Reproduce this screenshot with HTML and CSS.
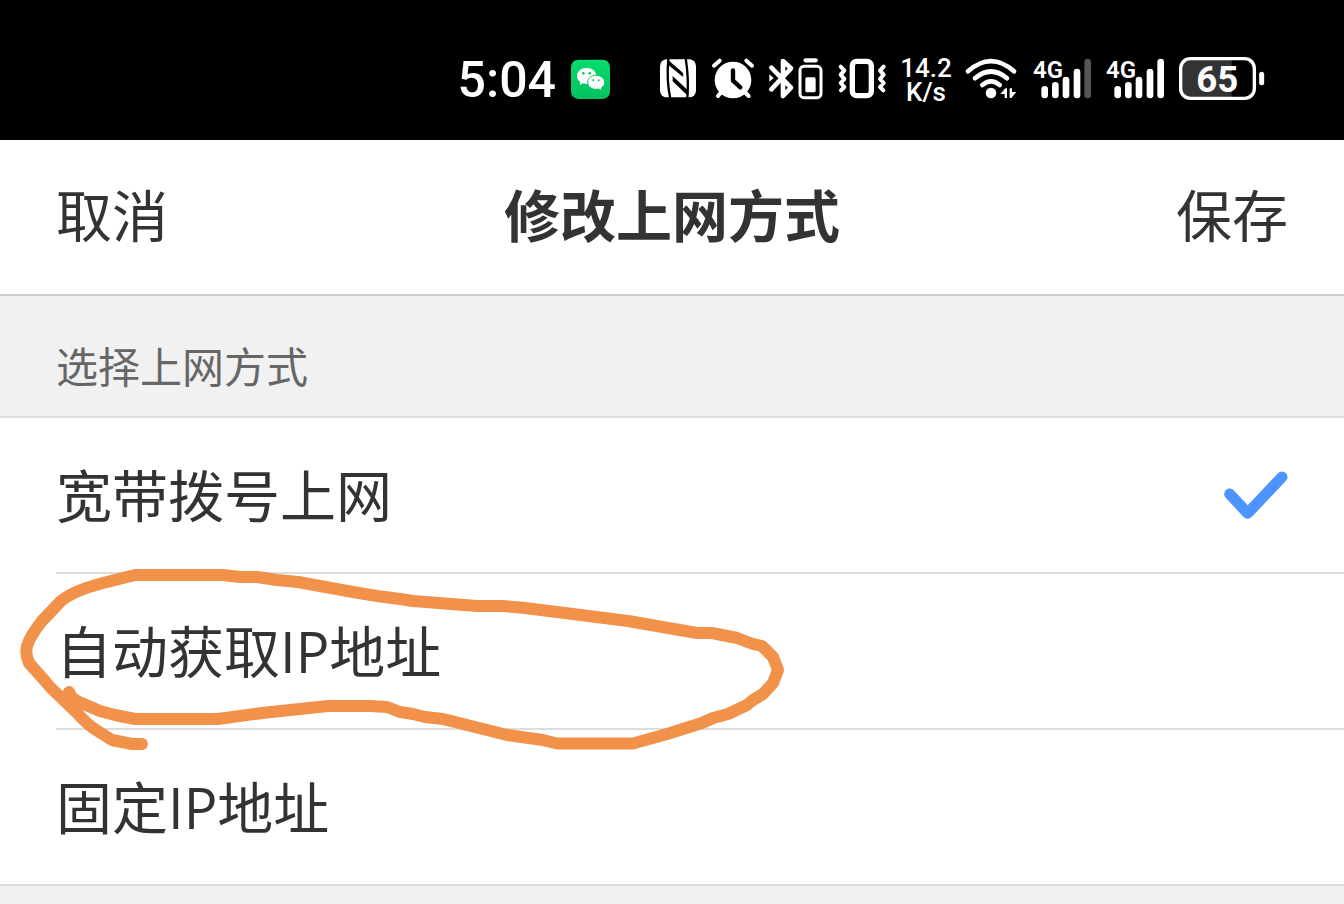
FILE: index.html
```html
<!DOCTYPE html>
<html lang="zh-CN">
<head>
<meta charset="utf-8">
<meta name="viewport" content="width=device-width, initial-scale=1">
<title>修改上网方式</title>
<link rel="stylesheet" href="styles.css">
</head>
<body>
<div class="status">
  <time class="clock">5:04</time>
  <svg class="icon icon-wechat" viewBox="363 51 117 132" role="img" aria-label="微信">
    <defs><linearGradient id="wx" x1="0" y1="0" x2="0" y2="1"><stop offset="0" stop-color="#04dc6b"/><stop offset="1" stop-color="#05c160"/></linearGradient></defs>
    <rect x="363" y="59" width="117" height="118" rx="22" fill="url(#wx)"/>
    <path fill="#fff" d="M410 84c-17 0-29 10-29 24 0 8 4 14 10 18l-2 9 10-5 12 2c16 0 28-10 28-24s-13-24-29-24z"/>
    <path fill="#fff" stroke="#05cd65" stroke-width="3" d="M438 106c-14 0-25 9-25 21s11 21 25 21l9-1 9 5-2-8c6-4 10-10 10-17 0-12-12-21-26-21z"/>
    <g fill="#05cd65"><circle cx="400" cy="100" r="4"/><circle cx="419" cy="100" r="4"/><circle cx="430" cy="121" r="3"/><circle cx="446" cy="121" r="3"/></g>
  </svg>
  <span class="spacer"></span>
  <svg class="icon icon-nfc" viewBox="45 51 111 132" role="img" aria-label="NFC">
    <rect x="45" y="58" width="108" height="114" rx="20" fill="#fff"/>
    <path d="M70 56Q64 122 76 176M122 54Q132 118 127 174" fill="none" stroke="#000" stroke-width="7"/>
    <path d="M67 58L115 100V112L73 77ZM83 108L130 152V169L83 124Z" fill="#000"/>
    <path d="M115 56V112" fill="none" stroke="#fff" stroke-width="2"/>
  </svg>
  <svg class="icon icon-alarm" viewBox="201 51 126 132" role="img" aria-label="闹钟">
    <g fill="none" stroke="#fff" stroke-width="12" stroke-linecap="round"><path d="M207 77l17-15M321 77l-17-15M229 156l-10 12M299 156l12 12"/></g>
    <circle cx="264" cy="120" r="55" fill="#fff"/>
    <path d="M264 91v31l22 20" fill="none" stroke="#000" stroke-width="13" stroke-linecap="round" stroke-linejoin="round"/>
  </svg>
  <svg class="icon icon-bluetooth" viewBox="374 51 162 132" role="img" aria-label="蓝牙设备电量">
    <path d="M381 83l59 60-24 25V63l24 22-59 63" fill="none" stroke="#fff" stroke-width="14" stroke-linecap="round" stroke-linejoin="round"/>
    <path d="M375 103v22l13-11z" fill="#fff"/>
    <rect x="467" y="79" width="63" height="94" rx="12" fill="none" stroke="#fff" stroke-width="9"/>
    <rect x="483" y="112" width="31" height="45" rx="5" fill="#fff"/>
    <path d="M484 61h30" stroke="#fff" stroke-width="13" stroke-linecap="round"/>
  </svg>
  <svg class="icon icon-vibrate" viewBox="40 51 144 132" role="img" aria-label="振动">
    <g fill="none" stroke="#fff" stroke-linecap="round" stroke-linejoin="round">
      <rect x="83" y="64" width="57" height="103" rx="13" stroke-width="16"/>
      <path stroke-width="12" d="M48 80l11 12-11 12 11 13-11 12 11 12-10 10M177 80l-11 12 11 12-11 13 11 12-11 12 10 10"/>
    </g>
  </svg>
  <span class="speed">14.2<br>K/s</span>
  <svg class="icon icon-wifi" viewBox="420 51 156 132" role="img" aria-label="无线网络">
    <path d="M426 94q69-61 138 0M447 115q48-41 96 0M469 135q26-22 52 0" fill="none" stroke="#fff" stroke-width="14" stroke-linecap="round"/>
    <circle cx="495" cy="159" r="16" fill="#fff"/>
    <path fill="#fff" d="M523 162l15-17h5v29h-7v-12zM571 156l-15 18h-5v-29h7v11z"/>
  </svg>
  <svg class="icon icon-signal" viewBox="33 51 174 132" role="img" aria-label="卡一信号">
    <text class="network" x="33" y="114">4G</text>
    <g stroke="#fff" stroke-width="20" stroke-linecap="round"><path d="M68 148v17M100 136v29M132 120v45M165 96v69"/><path stroke="#555" d="M197 66v99"/></g>
  </svg>
  <svg class="icon icon-signal" viewBox="33 51 174 132" role="img" aria-label="卡二信号">
    <text class="network" x="33" y="114">4G</text>
    <path stroke="#fff" stroke-width="20" stroke-linecap="round" d="M68 148v17M100 136v29M132 120v45M165 96v69M197 66v99"/>
  </svg>
  <svg class="icon icon-battery" viewBox="477 51 258 132" role="img" aria-label="电量 65%">
    <path d="M635 57H510q-27 0-27 27v63q0 27 27 27h125z" fill="#333"/>
    <rect x="482" y="56" width="221" height="119" rx="29" fill="none" stroke="#fff" stroke-width="10"/>
    <path d="M725 103v25" stroke="#fff" stroke-width="15" stroke-linecap="round"/>
    <text class="charge" x="592" y="156">65</text>
  </svg>
</div>

<header class="navbar">
  <button class="nav-button" type="button">取消</button>
  <h1 class="title">修改上网方式</h1>
  <button class="nav-button" type="submit" form="mode-form">保存</button>
</header>

<main>
  <form id="mode-form">
    <h2 class="section-title" id="mode-title">选择上网方式</h2>
    <div class="options" role="radiogroup" aria-labelledby="mode-title">
      <label class="option">
        <span class="option-body"><span class="name">宽带拨号上网</span>
          <span class="choice"><input class="radio" type="radio" name="mode" value="pppoe" checked><svg class="check" viewBox="134 90 192 147" aria-hidden="true"><path d="M151 159l54 58L308 108" fill="none" stroke="#4d94ff" stroke-width="33" stroke-linecap="round" stroke-linejoin="round"/></svg></span>
        </span>
      </label>
      <label class="option">
        <span class="option-body"><span class="name">自动获取IP地址</span>
          <span class="choice"><input class="radio" type="radio" name="mode" value="dhcp"><svg class="check" viewBox="134 90 192 147" aria-hidden="true"><path d="M151 159l54 58L308 108" fill="none" stroke="#4d94ff" stroke-width="33" stroke-linecap="round" stroke-linejoin="round"/></svg></span>
        </span>
        <svg class="marker" viewBox="16 566 776 188" aria-hidden="true"><path d="M69 692L72 698 79 702 100 711 115 715 135 719H218L262 713 328 706H370L387 707 400 712 413 714 425 717 443 719 507 735 543 740 557 743.500H633L667 734 702 723 713 718 728 714 747 705 753 700 763 694 773 683 778 670 773 657 762 646 753 644 737 638 712 633H697L628 621 525 608 503 606H477L413 601 400 599 377 596 353 592 298 582 277 580 257 577H240L223 575H135L103 583Q72 591 60 602L42 621Q30 636 27 646 25 654 29 663L45 681 50 687 77 713Q88 725 96 730L112 740 132 744H142"/></svg>
      </label>
      <label class="option">
        <span class="option-body"><span class="name">固定IP地址</span>
          <span class="choice"><input class="radio" type="radio" name="mode" value="static"><svg class="check" viewBox="134 90 192 147" aria-hidden="true"><path d="M151 159l54 58L308 108" fill="none" stroke="#4d94ff" stroke-width="33" stroke-linecap="round" stroke-linejoin="round"/></svg></span>
        </span>
      </label>
    </div>
  </form>
</main>
</body>
</html>
```
FILE: styles.css
```css
* {
  box-sizing: border-box;
}

body {
  margin: 0;
  background: #f1f1f1;
  color: #333;
  font-family: "Open Sans", "Noto Sans CJK SC", sans-serif;
  font-size: 56px;
  line-height: 84px;
}

.status {
  display: flex;
  align-items: center;
  justify-content: flex-end;
  gap: 15px;
  padding: 48px 79px 30px;
  background: #000;
  color: #fff;
  font-family: Roboto, sans-serif;
  font-weight: 500;
}

.clock {
  padding-top: 2px;
  font-size: 50px;
  line-height: 60px;
}

.spacer {
  width: 20px;
}

.icon {
  flex: none;
  height: 44px;
  overflow: visible;
}

.icon-wechat { width: 39px; }
.icon-nfc { width: 37px; }
.icon-alarm { width: 42px; }
.icon-bluetooth { width: 54px; }
.icon-vibrate { width: 48px; }
.icon-wifi { width: 52px; }
.icon-signal { width: 58px; }
.icon-battery { width: 86px; }

.speed {
  width: 50px;
  display: flex;
  justify-content: center;
  padding-top: 2px;
  text-align: center;
  font-size: 26px;
  line-height: 24px;
}

.network {
  fill: #fff;
  font-size: 72px;
  font-weight: 600;
}

.charge {
  fill: #fff;
  font-size: 110px;
  font-weight: 700;
  text-anchor: middle;
}

.navbar {
  display: grid;
  grid-template-columns: 1fr auto 1fr;
  align-items: center;
  padding: 33px 56px 37px;
  border-bottom: 2px solid #ccc;
  background: #fff;
}

.nav-button {
  justify-self: start;
  padding: 0;
  border: 0;
  background: none;
  color: inherit;
  font: inherit;
  cursor: pointer;
}

.nav-button:last-child {
  justify-self: end;
}

.title {
  margin: 0;
  font-size: 56px;
  font-weight: 700;
}

.section-title {
  margin: 0;
  padding: 40px 56px 18px;
  border-bottom: 2px solid #ddd;
  color: #666;
  font-size: 42px;
  font-weight: 400;
  line-height: 62px;
}

.options {
  border-bottom: 2px solid #ddd;
  background: #fff;
}

.option {
  position: relative;
  display: block;
  padding-left: 56px;
  cursor: pointer;
}

.option-body {
  display: flex;
  align-items: center;
  justify-content: space-between;
  padding: 35px 56px 35px 0;
}

.option + .option .option-body {
  border-top: 2px solid #ddd;
}

.choice {
  display: grid;
}

.radio,
.check {
  grid-area: 1 / 1;
  width: 64px;
  height: 49px;
  margin: 0;
}

.radio {
  appearance: none;
}

.check {
  visibility: hidden;
  pointer-events: none;
}

.radio:checked + .check {
  visibility: visible;
}

.marker {
  position: absolute;
  z-index: 1;
  top: -6px;
  left: 16px;
  width: 776px;
  height: 188px;
  fill: none;
  stroke: #f29149;
  stroke-width: 12px;
  stroke-linecap: round;
  stroke-linejoin: round;
  pointer-events: none;
}
```
